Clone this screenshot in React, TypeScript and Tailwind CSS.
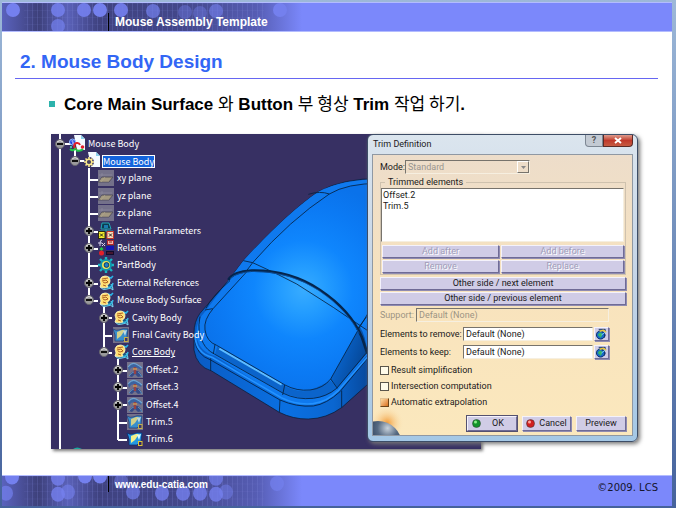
import React from 'react';

type IconKind = 'product' | 'part' | 'plane' | 'params' | 'relations' | 'body' | 'geoset' | 'trim' | 'offset';

interface TreeItem {
    label: string;
    depth: 0 | 1 | 2 | 3 | 4;
    icon: IconKind;
    toggle?: 'plus' | 'minus';
    state?: 'selected' | 'current';
    hidden?: boolean;
}

const TREE: TreeItem[] = [
    { label: 'Mouse Body', depth: 0, icon: 'product', toggle: 'minus' },
    { label: 'Mouse Body', depth: 1, icon: 'part', toggle: 'minus', state: 'selected' },
    { label: 'xy plane', depth: 2, icon: 'plane', hidden: true },
    { label: 'yz plane', depth: 2, icon: 'plane', hidden: true },
    { label: 'zx plane', depth: 2, icon: 'plane', hidden: true },
    { label: 'External Parameters', depth: 2, icon: 'params', toggle: 'plus' },
    { label: 'Relations', depth: 2, icon: 'relations', toggle: 'plus' },
    { label: 'PartBody', depth: 2, icon: 'body' },
    { label: 'External References', depth: 2, icon: 'geoset', toggle: 'plus' },
    { label: 'Mouse Body Surface', depth: 2, icon: 'geoset', toggle: 'minus' },
    { label: 'Cavity Body', depth: 3, icon: 'geoset', toggle: 'plus' },
    { label: 'Final Cavity Body', depth: 3, icon: 'trim', hidden: true },
    { label: 'Core Body', depth: 3, icon: 'geoset', toggle: 'minus', state: 'current' },
    { label: 'Offset.2', depth: 4, icon: 'offset', toggle: 'plus', hidden: true },
    { label: 'Offset.3', depth: 4, icon: 'offset', toggle: 'plus', hidden: true },
    { label: 'Offset.4', depth: 4, icon: 'offset', toggle: 'plus', hidden: true },
    { label: 'Trim.5', depth: 4, icon: 'trim', hidden: true },
    { label: 'Trim.6', depth: 4, icon: 'trim' }
];

const INDENT = ['pl-[4px]', 'pl-[19px]', 'pl-[33px]', 'pl-[48px]', 'pl-[62px]'];

const ICONS: Record<IconKind, React.ReactNode> = {
    product: (
        <>
            <path d="M5 -1h7l4 4v11H8z" fill="#f4fbff" />
            <path d="M12 -1v4h4z" fill="#8bd0ea" />
            <circle cx="3.5" cy="6" r="3" fill="#1d3fe0" stroke="#9cc4ff" />
            <path d="M2.500 5h2M3 7h2" stroke="#fff" />
            <path d="M8 13a3 3 0 113-4" fill="none" stroke="#e3202a" strokeWidth="2" />
            <path d="M7 12q-3 4-6 1M7 14q4 2 7-1" fill="none" stroke="#1fc94a" strokeWidth="2" />
            <circle cx="13.500" cy="11" r="1.800" fill="#e3202a" />
            <circle cx="2" cy="11" r="1" fill="#52e0c0" />
        </>
    ),
    part: (
        <>
            <path d="M4 -1h8l4 4v11H7z" fill="#f4fbff" />
            <path d="M12 -1v4h4z" fill="#8bd0ea" />
            <circle cx="5" cy="9" r="5" fill="#373063" />
            <path d="M5 4v10M0 9h10M1.500 5.500l7 7M8.500 5.500l-7 7" stroke="#fbe98c" strokeWidth="1.600" />
            <circle cx="5" cy="9" r="2.800" fill="#4a4260" stroke="#fbe98c" strokeWidth="1.400" />
        </>
    ),
    plane: (
        <>
            <path d="M4 7h11l-4 5H0z" fill="#a89c78" stroke="#3f3c48" strokeWidth=".8" />
            <path d="M3 9h9M2 11h9M7 7l-4 5" stroke="#c9bd8d" strokeWidth=".7" />
            <path d="M1 5h13M4 3v3" stroke="#9a97a8" strokeWidth=".7" />
        </>
    ),
    params: (
        <>
            <path d="M4 0h7l2 6H3z" fill="#0d3c50" stroke="#22a7b5" />
            <path d="M6 2h4v3H6z" fill="#1c7bb0" />
            <path d="M8 6v3M1 8h14" stroke="#22a7b5" />
            <rect x=".5" y="8.500" width="6.500" height="7" fill="#f4ee2e" stroke="#2b2a10" />
            <rect x="9" y="8.500" width="6.500" height="7" fill="#f8dcb8" stroke="#c2372a" />
            <path d="M2 10.500l3 3m0-3l-3 3M11 10.500l3 3m0-3l-3 3" stroke="#222" />
        </>
    ),
    relations: (
        <>
            <path d="M4 0Q2 0 2 3v3M0 3h4M4 3l3 3M7 3L4 6" fill="none" stroke="#d6d0ea" />
            <rect x="9.500" y=".5" width="6" height="4" fill="#f1b5a8" stroke="#b3262e" />
            <path d="M11 2h3" stroke="#802020" />
            <path d="M3.500 7l2 2-2 2-2-2z" fill="#1fc94a" />
            <circle cx="3.500" cy="13" r="2.500" fill="#e3202a" />
            <path d="M8 6h8v4H8z" fill="#1414b4" />
            <path d="M8 11h8v4H8z" fill="#120c2c" />
            <path d="M9 13h6" stroke="#7a2030" />
        </>
    ),
    body: (
        <>
            <path d="M8 0v16M0 8h16M2 2l12 12M14 2L2 14" stroke="#19b6c4" strokeWidth="2.400" />
            <circle cx="8" cy="8" r="5" fill="#e9e45a" stroke="#0f96ac" strokeWidth="2" />
            <circle cx="8.500" cy="8" r="2.400" fill="#1d7fc8" stroke="#0b3b64" />
        </>
    ),
    geoset: (
        <>
            <path d="M2 12q3 4 7 2t6 1q0-4-2-6" fill="#1a5a80" stroke="#7fd8f5" />
            <path d="M9 13q5 0 6-5" fill="none" stroke="#35b5e0" strokeWidth="1.500" />
            <path d="M10 2l3 1 2-2" fill="none" stroke="#2bb5e8" strokeWidth="1.600" />
            <path d="M2 5Q3 1 7 1q5 0 5 5 0 3-3 4l1 2-4 1-4-1 1-3z" fill="#ffdf70" stroke="#fff6c4" strokeWidth=".8" />
            <path d="M4 4l6-1M4 6l4-1 2 2-3 1-2-1M5 10l3 1" fill="none" stroke="#a5501f" strokeWidth=".9" />
        </>
    ),
    trim: (
        <>
            <path d="M0 2q3 2 6 1 4-2 9-1l-1 8-4 4-8 0q1-6-2-12z" fill="#2498e2" stroke="#0c2f72" strokeWidth=".8" />
            <path d="M4 5l5-2 3 0-4 6-4 3z" fill="#f2f08a" />
            <path d="M10 4l4-1-2 6z" fill="#d6fbff" />
            <rect x="11.500" y="10.500" width="3.500" height="4" fill="#28246b" stroke="#e0c433" />
        </>
    ),
    offset: (
        <>
            <path d="M1 5Q4 0 8 2q4 0 7 3l-1 3Q9 4 4 6L2 9z" fill="#2a5fa8" />
            <path d="M1 5Q5 0 9 2t6 4" fill="none" stroke="#6fb6e8" strokeWidth="1.200" />
            <path d="M2 14q2-4 5-5l4 0q3 2 4 5l-4 1-3-3-3 3z" fill="#213f88" />
            <path d="M2 14q3-4 5-4M11 10q2 1 4 5" fill="none" stroke="#4f9ad0" />
            <path d="M8 5v7" stroke="#a2342f" strokeWidth="2.400" />
            <path d="M6 7h4" stroke="#e0a648" strokeWidth="1.500" />
        </>
    )
};

// Hidden features keep their icon, greyed over a flat plate
const TreeIcon = ({ kind, hidden }: { kind: IconKind; hidden?: boolean }) => (
    <svg className={`h-4 w-4 shrink-0 overflow-visible ${hidden ? 'bg-[#74718a]' : ''}`} viewBox="0 0 16 16" aria-hidden="true">
        <g opacity={hidden ? 0.75 : 1}>{ICONS[kind]}</g>
    </svg>
);

const Toggle = ({ kind }: { kind?: 'plus' | 'minus' }) => {
    if (!kind) return <span className="w-[10px] shrink-0" />;
    return (
        <button type="button" aria-label={kind === 'plus' ? 'Expand' : 'Collapse'} className="h-[10px] w-[10px] shrink-0">
            <svg className="block h-full w-full" viewBox="0 0 10 10">
                <circle cx="5" cy="5" r="4.500" fill="#9a9a9c" stroke="#66656f" />
                <path d="M2 3q3-3 6 0" stroke="#dcdcdc" fill="none" />
                <path d={kind === 'plus' ? 'M2 5h6M5 2v6' : 'M2 5h6'} stroke="#000" strokeWidth="1.800" />
            </svg>
        </button>
    );
};

// Specification tree with its connector lines drawn behind the rows
const SpecTree = () => (
    <div className="relative h-full">
        <svg className="absolute inset-0 h-full w-full" viewBox="0 0 430 315" preserveAspectRatio="xMinYMin slice" aria-hidden="true">
            <g stroke="#fff" strokeWidth="2" fill="none">
                <path d="M9 0V315M14 10h6M24 16V24M29 27h6" />
                <path d="M38 34V162M38 46h9M38 63h9M38 80h9M38 98h9M38 115h9M38 132h9M38 150h9M38 167h9" />
                <path d="M53 173V219M53 184h8M53 202h8M53 219h8" />
                <path d="M67 225V306M67 237h9M67 254h9M67 271h9M67 289h9M67 306h9" />
            </g>
            <path d="M22 315q4-3 9 0z" fill="#17a99f" />
        </svg>
        <ul className="relative flex h-full flex-col py-px text-[9px] leading-[12px] text-white">
            {TREE.map((item, i) => (
                <li key={i} className={`flex min-h-0 flex-1 items-center ${INDENT[item.depth]}`}>
                    <Toggle kind={item.toggle} />
                    <span className="ml-1 mr-[3px] flex"><TreeIcon kind={item.icon} hidden={item.hidden} /></span>
                    <span
                        className={
                            item.state === 'selected'
                                ? 'bg-[#1464dc] leading-[11px] outline outline-white'
                                : item.state === 'current'
                                    ? 'underline'
                                    : ''
                        }
                    >
                        {item.label}
                    </span>
                </li>
            ))}
        </ul>
    </div>
);

const MouseModel = () => (
    <svg className="absolute inset-0 h-full w-full" viewBox="0 0 430 315" preserveAspectRatio="xMinYMin slice" aria-hidden="true">
        <defs>
            <radialGradient id="shine" gradientUnits="userSpaceOnUse" cx="370" cy="360" r="330">
                <stop offset="0" stopColor="#38acff" />
                <stop offset=".2" stopColor="#249dff" />
                <stop offset=".45" stopColor="#0f86fd" />
                <stop offset=".75" stopColor="#0b7af4" />
                <stop offset="1" stopColor="#0a72ea" />
            </radialGradient>
            <linearGradient id="side" x1="0" x2="1">
                <stop offset="0" stopColor="#0a5cc4" />
                <stop offset=".5" stopColor="#0a70e2" />
                <stop offset=".75" stopColor="#0a66d0" />
                <stop offset="1" stopColor="#063f8c" />
            </linearGradient>
            <linearGradient id="corner" x1="0" y1="0" x2="1" y2=".6">
                <stop offset="0" stopColor="#0b74ea" />
                <stop offset="1" stopColor="#05438f" />
            </linearGradient>
        </defs>
        <g transform="translate(129 36) scale(.33333)" strokeLinejoin="round">
            <path d="M600 26Q490 24 415 65Q320 130 190 272L145 332L60 430Q42 455 42 490V540Q50 590 95 603L298 727Q340 748 385 747Q440 746 486 712L600 610Z" fill="url(#side)" stroke="#06182f" strokeWidth="2" />
            <path d="M600 28Q490 28 415 65Q320 130 190 272L145 332L75 425Q45 455 50 500Q58 545 105 558L300 680Q340 703 390 702Q430 700 470 665L600 510Z" fill="#0f79ee" />
            <path d="M600 40Q500 40 448 72Q330 150 218 278L100 415Q70 450 75 480Q80 515 110 526L315 645Q350 664 390 660Q430 655 452 627L600 400Z" fill="url(#shine)" />
            <path d="M112 530L315 648Q350 668 388 662L452 632L472 655Q440 686 390 685Q350 685 312 670L105 552Z" fill="#0b64cb" />
            <path d="M118 536L305 644" stroke="#5fbcff" strokeWidth="6" />
            <path d="M452 627L540 470Q558 500 562 548L472 655Z" fill="url(#corner)" />
            <g fill="none" stroke="#06213f" strokeWidth="2.500">
                <path d="M600 40Q500 40 448 72Q330 150 218 278" />
                <path d="M205 300L100 415Q70 450 75 480Q80 515 110 526L315 645Q350 664 390 660Q430 655 452 627L540 470L600 370" />
                <path d="M218 278L200 302" />
                <path d="M385 73Q420 62 448 72M190 272L218 278Q290 310 350 342Q460 410 575 490" />
                <path d="M78 415Q95 380 150 332M60 440Q50 490 70 520Q80 540 103 552L310 670Q350 690 400 685Q440 680 470 655L575 530" />
                <path d="M44 510Q50 555 92 570L300 690Q350 712 400 708Q440 702 480 665L600 520" stroke="#052a57" strokeWidth="3" />
                <path d="M105 523L100 552M92 565V603M314 645L308 675M300 690L298 727M452 627L472 655M485 662V712" />
                <path d="M75 420L98 416M530 480L560 440" />
            </g>
            <path d="M46 500Q48 548 96 562L304 683Q350 706 400 701Q440 696 476 661L575 546" fill="none" stroke="#2392ff" strokeWidth="5" />
            <path d="M145 330Q160 305 215 302Q330 300 420 360Q510 420 545 500L562 550" fill="none" stroke="#05254b" strokeWidth="8" />
            <path d="M150 326Q165 309 215 304Q330 303 416 361Q500 418 538 490" fill="none" stroke="#105eb5" strokeWidth="2" />
        </g>
    </svg>
);

// Circle centres, opacity last
const TOP_DOTS = [
    [11, 7, 1], [56, 7, 0.85], [56, 23, 0.7], [82, 7, 0.9], [98, 7, 1], [119, 7, 0.9],
    [151, 8, 0.7], [183, 9, 0.4], [198, 10, 0.4], [214, 8, 0.6], [278, 7, 1]
];
const BOTTOM_DOTS = [
    [10, 1, 1], [4, 16, 0.7], [56, 2, 0.8], [56, 17, 0.8], [66, 15, 0.6], [83, 0, 1], [98, 0, 1], [119, 5, 0.5],
    [131, 15, 0.7], [160, 16, 0.8], [181, 16, 0.8], [198, 16, 0.8], [214, 2, 0.7], [214, 17, 0.8], [224, 15, 0.5], [275, 7, 0.7]
];

// Half-tone texture on the left part of the header and footer bars
const BarTexture = ({ id, dots }: { id: string; dots: number[][] }) => (
    <svg className="absolute inset-y-0 left-0 h-full w-[300px]" viewBox="0 0 300 28" preserveAspectRatio="none" aria-hidden="true">
        <defs>
            <linearGradient id={`${id}-fade`} x1="0" x2="1">
                <stop offset="0" stopColor="#5a62bd" />
                <stop offset=".12" stopColor="#3d407a" />
                <stop offset=".22" stopColor="#5a61b8" />
                <stop offset=".32" stopColor="#3f4280" />
                <stop offset=".6" stopColor="#43478a" />
                <stop offset=".85" stopColor="#565db4" />
                <stop offset="1" stopColor="#7b88fb" />
            </linearGradient>
            <pattern id={`${id}-grid`} width="5" height="7" patternUnits="userSpaceOnUse">
                <path d="M0 0V7" stroke="#7d86dd" strokeWidth="1" opacity=".45" />
                <path d="M0 0H5" stroke="#7d86dd" strokeWidth=".6" opacity=".3" />
            </pattern>
        </defs>
        <rect width="300" height="28" fill={`url(#${id}-fade)`} />
        <rect x="22" width="240" height="28" fill={`url(#${id}-grid)`} />
        {dots.map(([cx, cy, opacity]) => (
            <circle key={`${cx}-${cy}`} cx={cx} cy={cy} r="7" fill="#7480ee" opacity={opacity} />
        ))}
    </svg>
);

const RAISED = 'border border-t-[#f4f2fb] border-l-[#f4f2fb] border-r-[#6f6b96] border-b-[#6f6b96] bg-[#d0cce6] shadow-[1px_1px_0_#8f8bb0]';
const SUNKEN = 'border border-t-[#77736c] border-l-[#77736c] border-r-[#f6efe0] border-b-[#f6efe0]';

const DialogButton = ({ children, className = 'h-[13px]', disabled }: { children: React.ReactNode; className?: string; disabled?: boolean }) => (
    <button
        type="button"
        disabled={disabled}
        className={`flex items-center justify-center leading-[11px] ${RAISED} ${disabled ? 'text-[#a19db8] [text-shadow:1px_1px_0_#fff]' : ''} ${className}`}
    >
        {children}
    </button>
);

const ElementField = ({ id, label, value }: { id: string; label: string; value: string }) => (
    <div className="flex h-[14px] items-center">
        <label htmlFor={id} className="w-[83px] whitespace-nowrap">{label}</label>
        <input id={id} defaultValue={value} className={`h-[14px] min-w-0 flex-1 bg-white pl-[2px] leading-[12px] ${SUNKEN}`} />
        <button type="button" aria-label={`Edit list: ${label}`} className={`ml-px mr-[17px] h-[14px] w-[15px] ${RAISED}`}>
            <svg className="h-full w-full" viewBox="0 0 14 12">
                <circle cx="6" cy="7" r="4.500" fill="#1769c9" stroke="#0b2c66" />
                <path d="M3 7q2-4 4-2t-1 5" fill="#37b56a" />
                <path d="M4 1h7v2M8 4l3 3-1 3" stroke="#0b2c66" fill="none" />
                <path d="M5 3l4-1 3 2" stroke="#e9c63b" strokeWidth="1.500" fill="none" />
                <path d="M7 7l4-3" stroke="#7fe0ff" />
            </svg>
        </button>
    </div>
);

const CheckOption = ({ id, label, checked }: { id: string; label: string; checked?: boolean }) => (
    <div className="flex h-4 items-center gap-[2px]">
        <input
            id={id}
            type="checkbox"
            defaultChecked={checked}
            className="h-[9px] w-[9px] appearance-none border border-[#5a564c] bg-[#fffbe9] checked:border-[#e3c393] checked:border-r-[#6d4418] checked:border-b-[#6d4418] checked:bg-linear-to-br checked:from-[#fbd9a0] checked:to-[#d9700f]"
        />
        <label htmlFor={id}>{label}</label>
    </div>
);

const Ball = ({ color, light }: { color: string; light: string }) => (
    <svg className="h-[9px] w-[9px] shrink-0" viewBox="0 0 9 9" aria-hidden="true">
        <circle cx="4.500" cy="4.500" r="4" fill={color} stroke="#333" strokeWidth=".5" />
        <circle cx="3.500" cy="3" r="1.500" fill={light} />
    </svg>
);

const TrimDialog = () => (
    <section
        aria-label="Trim Definition"
        className="relative -ml-[114px] flex h-[308px] w-[271px] shrink-0 flex-col rounded-md border border-[#3d4d66] bg-linear-to-b from-[#dbe5ee] via-[#c3d3e6] to-[#a4c8e6] px-1 pb-[5px] font-['Roboto',sans-serif] text-[9px] leading-[12px] text-[#1b1a20] shadow-[2px_2px_4px_#777]"
    >
        <header className="flex h-[19px] shrink-0 justify-between">
            <h2 className="pl-px pt-[3px]">Trim Definition</h2>
            <div className="flex h-[12px]">
                <button type="button" aria-label="Help" className="flex w-[18px] items-center justify-center rounded-bl border border-t-0 border-[#7d8793] bg-[#c3cad3] font-bold leading-none text-[#555]">
                    ?
                </button>
                <button type="button" aria-label="Close" className="flex w-[30px] items-center justify-center rounded-br border border-t-0 border-[#5b2a25] bg-linear-to-b from-[#dd9a8c] via-[#c0392b] to-[#c65a41] text-white">
                    <svg className="h-[7px] w-[8px]" viewBox="0 0 8 7"><path d="M1 1l6 5M7 1L1 6" stroke="#fff" strokeWidth="2" /></svg>
                </button>
            </div>
        </header>

        <div className="relative flex flex-1 flex-col border border-[#8f98a3] bg-linear-to-b from-[#edddca] via-[#f8e3bd] to-[#fbe8bd] pl-[7px] pr-[6px] pt-[5px]">
            <div className="flex h-[14px] items-center">
                <label htmlFor="mode" className="w-[25px]">Mode:</label>
                <div className={`relative h-[14px] w-[125px] ${SUNKEN}`}>
                    <select id="mode" disabled className="block h-[12px] w-full appearance-none pl-[2px] leading-[12px] text-[#99958f]">
                        <option>Standard</option>
                    </select>
                    <span className="pointer-events-none absolute right-0 top-0 flex h-[12px] w-[12px] items-center justify-center border border-t-white border-l-white border-r-[#77736c] border-b-[#77736c]">
                        <svg className="h-[3px] w-[5px]" viewBox="0 0 5 3"><path d="M0 0h5L2.500 3z" fill="#888" /></svg>
                    </span>
                </div>
            </div>

            <fieldset className="mt-[2px] border border-[#cfc2ae] pb-px pr-px">
                <legend className="ml-[4px] px-[3px] leading-[12px]">Trimmed elements</legend>
                <select multiple size={4} aria-label="Trimmed elements" className={`block h-[54px] w-full overflow-hidden bg-white pl-px pt-px ${SUNKEN}`}>
                    <option className="h-[11px] min-h-0 p-0 leading-[11px]">Offset.2</option>
                    <option className="h-[11px] min-h-0 p-0 leading-[11px]">Trim.5</option>
                </select>
                <div className="mt-[3px] grid grid-cols-[117px_1fr] gap-[2px] pl-px">
                    <DialogButton disabled>Add after</DialogButton>
                    <DialogButton disabled>Add before</DialogButton>
                    <DialogButton disabled>Remove</DialogButton>
                    <DialogButton disabled>Replace</DialogButton>
                </div>
            </fieldset>

            <div className="mt-[2px] flex flex-col gap-[2px]">
                <DialogButton>Other side / next element</DialogButton>
                <DialogButton>Other side / previous element</DialogButton>
            </div>

            <div className="mt-[3px] flex h-[14px] items-center pr-[17px] text-[#9c9484]">
                <label htmlFor="support" className="w-[36px]">Support:</label>
                <input id="support" disabled defaultValue="Default (None)" className={`h-[14px] min-w-0 flex-1 pl-[2px] leading-[12px] ${SUNKEN}`} />
            </div>

            <div className="mt-[5px] flex flex-col gap-1">
                <ElementField id="remove" label="Elements to remove:" value="Default (None)" />
                <ElementField id="keep" label="Elements to keep:" value="Default (None)" />
            </div>

            <div className="mt-[3px]">
                <CheckOption id="simplify" label="Result simplification" />
                <CheckOption id="intersect" label="Intersection computation" />
                <CheckOption id="extrapolate" label="Automatic extrapolation" checked />
            </div>

            <svg className="absolute bottom-0 left-0 h-[26px] w-[34px]" viewBox="0 0 34 26" aria-hidden="true">
                <defs>
                    <radialGradient id="glow"><stop offset="0" stopColor="#f29a35" /><stop offset="1" stopColor="#fbe8bd" stopOpacity="0" /></radialGradient>
                    <radialGradient id="planet" cx=".7" cy=".15" r=".6"><stop offset="0" stopColor="#c9d3dc" /><stop offset=".35" stopColor="#566a82" /><stop offset="1" stopColor="#0b1d3a" /></radialGradient>
                </defs>
                <circle cx="14" cy="14" r="17" fill="url(#glow)" />
                <circle cx="5" cy="36" r="24" fill="url(#planet)" />
            </svg>

            <div className="relative mb-[4px] mt-auto flex justify-end gap-[5px]">
                <DialogButton className="h-[15px] w-[50px] gap-[11px] pr-[8px] outline outline-[#55516f]"><Ball color="#12932b" light="#8ef08a" />OK</DialogButton>
                <DialogButton className="h-[15px] w-[49px] gap-1"><Ball color="#d02020" light="#ffa59a" />Cancel</DialogButton>
                <DialogButton className="h-[15px] w-[50px]">Preview</DialogButton>
            </div>
        </div>
    </section>
);

const Ko = ({ children }: { children: React.ReactNode }) => (
    <span className="font-['Noto_Sans_CJK_KR',sans-serif] font-normal">{children}</span>
);

const App = () => (
    <div className="flex min-h-screen flex-col bg-linear-to-b from-[#9db8d8] to-[#45629c] py-[2px] pl-[2px] pr-1 font-['Liberation_Sans',sans-serif]">
        <header className="relative flex h-[30px] items-center border-y border-[#b3bcff] bg-[#7b88fb]">
            <BarTexture id="top" dots={TOP_DOTS} />
            <div className="relative ml-[106px] flex h-[18px] items-center self-end border-l border-black pl-[6px]">
                <span className="text-[12px] font-bold leading-[16px] text-white">Mouse Assembly Template</span>
            </div>
        </header>

        <main className="flex-1 bg-white pl-[13px] pr-[14px]">
            <h1 className="h-[47px] border-b border-[#6666f2] pl-[5px] pt-[18px] text-[19px] font-bold leading-[24px] text-[#3366f5]">2. Mouse Body Design</h1>
            <p className="ml-[34px] mt-[14px] flex h-[22px] items-center gap-[9px] text-[17px] font-bold leading-[22px] text-black">
                <span className="h-[6px] w-[6px] bg-[#2db3ac]" />
                <span>
                    Core Main Surface <Ko>와</Ko> Button <Ko>부 형상</Ko> Trim <Ko>작업 하기</Ko>.
                </span>
            </p>
            <div className="ml-[36px] mt-[19px] flex items-start">
                <div className="relative h-[315px] w-[430px] shrink-0 overflow-hidden bg-[#373063] font-['Noto_Sans_CJK_KR',sans-serif] shadow-[2px_2px_3px_#777]">
                    <MouseModel />
                    <SpecTree />
                </div>
                <TrimDialog />
            </div>
        </main>

        <footer className="relative flex h-[31px] items-start justify-between border-t border-[#b3bcff] bg-[#7b88fb] pr-[14px]">
            <BarTexture id="bottom" dots={BOTTOM_DOTS} />
            <div className="relative ml-[106px] flex h-[16px] items-center border-l border-black pl-[6px] pt-px">
                <a href="#home" className="text-[10px] font-bold leading-[14px] text-white">www.edu-catia.com</a>
            </div>
            <span className="relative pt-[6px] font-['DejaVu_Sans',sans-serif] text-[10px] leading-[12px] text-[#15152c]">©2009. LCS</span>
        </footer>
    </div>
);

export default App;
